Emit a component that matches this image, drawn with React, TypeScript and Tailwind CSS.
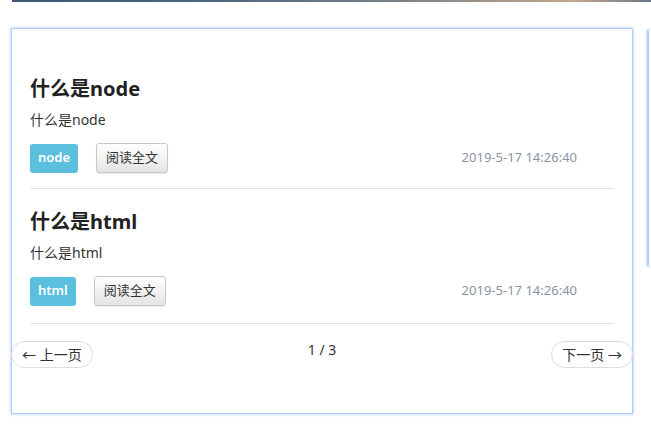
const posts = [
  { title: "什么是node", summary: "什么是node", tag: "node", date: "2019-5-17 14:26:40" },
  { title: "什么是html", summary: "什么是html", tag: "html", date: "2019-5-17 14:26:40" },
];

export default function App() {
  return (
    <div className="relative h-[429px] w-[651px] overflow-hidden bg-white font-['Noto_Sans','Noto_Sans_CJK_SC',sans-serif] text-[#333]">
      <div className="ml-[12px] h-[2px] bg-[linear-gradient(90deg,#3d5878_0%,#4d6580_30%,#7a8088_60%,#c2a88c_88%,#6a7486_100%)]" />
      <div className="flex pt-[26px]">
        <div className="ml-[11px] flex h-[386px] w-[622px] shrink-0 flex-col border border-[#b3cff5] bg-white pt-[26px] shadow-[0_0_3px_#9fc0ef]">
          {posts.map((p, i) => (
            <article
              key={p.tag}
              className={
                i === 0
                  ? "mx-[18px] border-b border-[#e2e2e2] pb-[15px] pt-[20px]"
                  : "mx-[18px] border-b border-[#e2e2e2] pb-[17px] pt-[19px]"
              }
            >
              <h2 className="text-[20px] font-bold leading-[28px] text-[#222]">{p.title}</h2>
              <p className="mt-[7px] text-[14px] leading-[20px] text-[#333]">{p.summary}</p>
              <div className="mt-[13px] flex items-center">
                <span className="flex h-[29px] items-center rounded-[3px] bg-[#5bc0de] px-[8px] text-[13px] font-semibold text-white">
                  {p.tag}
                </span>
                <button className="ml-[18px] h-[30px] rounded-[3px] border border-[#c8c8c8] bg-[linear-gradient(#ffffff,#e4e4e4)] px-[9px] text-[13px] text-[#333] shadow-[0_1px_1px_rgba(0,0,0,0.08)]">
                  阅读全文
                </button>
                <span className="ml-auto mr-[37px] text-[13px] text-[#8a94a4]">{p.date}</span>
              </div>
            </article>
          ))}
          <div className="relative mt-[17px] flex items-start justify-between">
            <button className="-ml-[1px] flex h-[27px] items-center rounded-full border border-[#dcdcdc] bg-white px-[10px] text-[14px] text-[#333]">
              ← 上一页
            </button>
            <span className="mt-[-1px] text-[14px] leading-[20px] text-[#333]">1 / 3</span>
            <button className="-mr-[1px] flex h-[27px] items-center rounded-full border border-[#dcdcdc] bg-white px-[10px] text-[14px] text-[#333]">
              下一页 →
            </button>
          </div>
        </div>
        <div className="ml-[14px] mt-[2px] h-[236px] w-[6px] shrink-0 border-l-2 border-[#b3cff5] shadow-[0_0_3px_#9fc0ef]" />
      </div>
    </div>
  );
}
